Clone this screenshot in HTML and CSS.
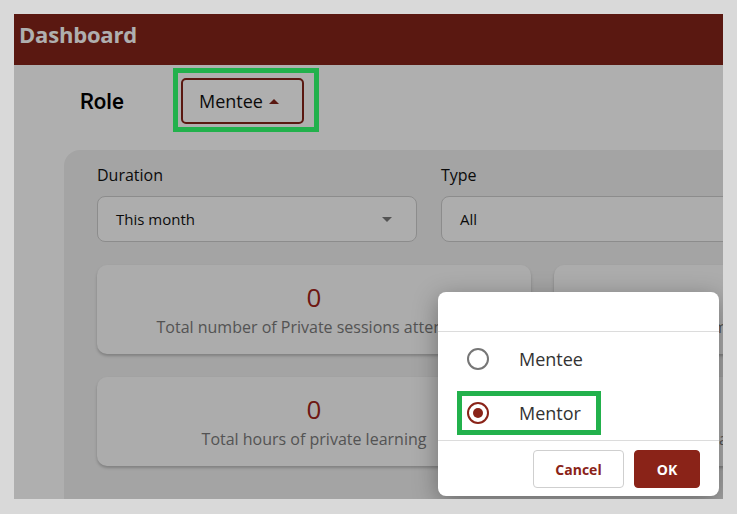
FILE: index.html
```html
<!DOCTYPE html>
<html lang="en">
<head>
<meta charset="utf-8">
<title>Dashboard</title>
<link rel="stylesheet" href="styles.css">
</head>
<body>
<div class="screen">
  <header class="topbar">
    <h1 class="topbar-title">Dashboard</h1>
  </header>
  <main class="main">
    <div class="role-row">
      <span class="role-label">Role</span>
      <div class="role-wrap">
        <button class="role-btn" type="button">Mentee <span class="caret-up"></span></button>
        <span class="annot annot-role"></span>
      </div>
    </div>
    <section class="panel">
      <div class="filters">
        <div class="field">
          <label class="field-label">Duration</label>
          <div class="select"><span>This month</span><span class="caret-down"></span></div>
        </div>
        <div class="field">
          <label class="field-label">Type</label>
          <div class="select"><span>All</span></div>
        </div>
      </div>
      <div class="cards">
        <div class="card"><div class="card-num">0</div><div class="card-text">Total number of Private sessions attended</div></div>
        <div class="card"><div class="card-num">0</div><div class="card-text">Total number of Group sessions</div></div>
        <div class="card"><div class="card-num">0</div><div class="card-text">Total hours of private learning</div></div>
        <div class="card"><div class="card-num">0</div><div class="card-text">Total hours of group</div></div>
      </div>
    </section>
  </main>
  <div class="overlay"></div>
  <div class="dialog" role="dialog">
    <div class="dialog-head"></div>
    <div class="dialog-body">
      <div class="option"><span class="radio"></span><span class="option-text">Mentee</span></div>
      <div class="option"><span class="radio radio-on"></span><span class="option-text">Mentor</span><span class="annot annot-mentor"></span></div>
    </div>
    <div class="dialog-foot">
      <button class="btn btn-cancel" type="button">Cancel</button>
      <button class="btn btn-ok" type="button">OK</button>
    </div>
  </div>
</div>
</body>
</html>
```

FILE: styles.css
```css
* { box-sizing: border-box; }
html, body { margin: 0; padding: 0; }
body {
  background: #d9d9d9;
  font-family: "Open Sans", "Noto Sans", sans-serif;
  width: 737px;
  height: 514px;
  overflow: hidden;
}
.screen {
  position: relative;
  margin: 14px 0 0 14px;
  width: 709px;
  height: 485px;
  overflow: hidden;
  display: flex;
  flex-direction: column;
  background: #ffffff;
}
.topbar {
  height: 51px;
  flex: none;
  background: #84231a;
  display: flex;
  align-items: flex-start;
  padding: 8px 0 0 5px;
}
.topbar-title {
  margin: 0;
  color: #ffffff;
  font-size: 22px;
  font-weight: 700;
  letter-spacing: -0.2px;
  line-height: 24px;
}
.main {
  flex: 1;
  display: flex;
  flex-direction: column;
  background: #ffffff;
}
.role-row {
  display: flex;
  align-items: center;
  padding: 13px 0 0 66px;
}
.role-label {
  width: 101px;
  font-family: Roboto, sans-serif;
  font-weight: 500;
  font-size: 22px;
  color: #000;
}
.role-wrap { position: relative; }
.role-btn {
  width: 123px;
  height: 46px;
  border: 2px solid #84231a;
  border-radius: 5px;
  background: #ffffff;
  display: flex;
  align-items: center;
  padding: 0 0 0 16px;
  font-family: "Open Sans", sans-serif;
  font-size: 18px;
  color: #111;
  gap: 6px;
}
.caret-up {
  width: 0; height: 0;
  border-left: 5px solid transparent;
  border-right: 5px solid transparent;
  border-bottom: 5px solid #84231a;
  margin-top: 1px;
}
.annot {
  position: absolute;
  border: 5px solid #22b14c;
  z-index: 5;
}
.annot-role {
  left: -8px;
  top: -10px;
  width: 146px;
  height: 64px;
}
.panel {
  margin: 26px 0 0 50px;
  flex: 1;
  background: #efefef;
  border-top-left-radius: 16px;
  padding: 14px 0 0 33px;
}
.filters {
  display: grid;
  grid-template-columns: 320px 320px;
  gap: 24px;
}
.field-label {
  display: block;
  font-size: 16px;
  line-height: 22px;
  color: #111;
  margin-bottom: 10px;
}
.select {
  height: 46px;
  border: 1px solid #cdcdcd;
  border-radius: 8px;
  background: #fcfcfc;
  display: flex;
  align-items: center;
  justify-content: space-between;
  padding: 0 24px 0 18px;
  font-size: 15px;
  color: #111;
}
.caret-down {
  width: 0; height: 0;
  border-left: 5px solid transparent;
  border-right: 5px solid transparent;
  border-top: 5px solid #7a7a7a;
}
.cards {
  margin-top: 23px;
  display: grid;
  grid-template-columns: 434px 434px;
  grid-auto-rows: 89px;
  gap: 23px;
}
.card {
  background: #fbfbfb;
  border-radius: 10px;
  box-shadow: 0 2px 3px rgba(0,0,0,0.22);
  display: flex;
  flex-direction: column;
  align-items: center;
  padding-top: 17px;
}
.card-num {
  font-size: 26px;
  line-height: 30px;
  color: #a0241a;
}
.card-text {
  margin-top: 4px;
  font-size: 16px;
  line-height: 22px;
  color: #7a7a7a;
  white-space: nowrap;
}
.overlay {
  position: absolute;
  inset: 0;
  background: rgba(0,0,0,0.314);
}
.dialog {
  position: absolute;
  left: 424px;
  top: 278px;
  width: 281px;
  background: #ffffff;
  border-radius: 8px;
  box-shadow: 0 6px 24px rgba(0,0,0,0.35);
  display: flex;
  flex-direction: column;
}
.dialog-head {
  height: 40px;
  border-bottom: 1px solid #dcdcdc;
}
.dialog-body {
  border-bottom: 1px solid #dcdcdc;
}
.option {
  position: relative;
  height: 54px;
  display: flex;
  align-items: center;
  padding-left: 29px;
}
.radio {
  width: 22px;
  height: 22px;
  border: 2px solid #767676;
  border-radius: 50%;
  display: flex;
  align-items: center;
  justify-content: center;
  flex: none;
}
.radio-on { border-color: #8a2318; }
.radio-on::after {
  content: "";
  width: 10px;
  height: 10px;
  border-radius: 50%;
  background: #8a2318;
}
.option-text {
  margin-left: 30px;
  font-size: 18px;
  color: #333;
}
.annot-mentor {
  left: 19px;
  top: 5px;
  width: 144px;
  height: 44px;
}
.dialog-foot {
  display: flex;
  justify-content: flex-end;
  gap: 10px;
  padding: 9px 19px 8px 0;
}
.btn {
  height: 38px;
  border-radius: 4px;
  font-family: "Open Sans", sans-serif;
  font-weight: 700;
  font-size: 14px;
}
.btn-cancel {
  width: 91px;
  background: #fff;
  border: 1px solid #cfcfcf;
  color: #8a2318;
}
.btn-ok {
  width: 66px;
  background: #8a2318;
  border: 1px solid #8a2318;
  color: #fff;
}
```
